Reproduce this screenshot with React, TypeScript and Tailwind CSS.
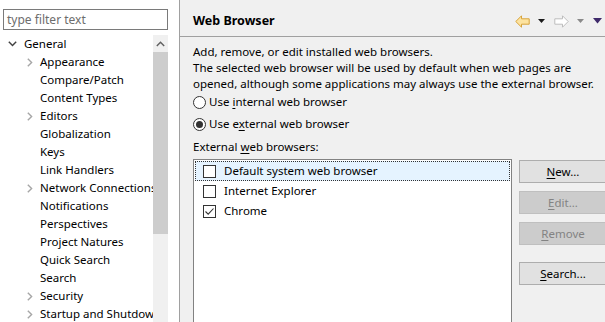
import React from "react";

const Chev = ({ down }: { down?: boolean }) =>
  down ? (
    <svg width="9" height="6" viewBox="0 0 9 6" className="block shrink-0">
      <path d="M0.8 0.8 L4.5 4.6 L8.2 0.8" fill="none" stroke="#404040" strokeWidth="1.4" />
    </svg>
  ) : (
    <svg width="6" height="9" viewBox="0 0 6 9" className="block shrink-0">
      <path d="M0.8 0.8 L4.6 4.5 L0.8 8.2" fill="none" stroke="#a6a6a6" strokeWidth="1.4" />
    </svg>
  );

const treeItems: { label: string; exp?: boolean }[] = [
  { label: "Appearance", exp: true },
  { label: "Compare/Patch" },
  { label: "Content Types" },
  { label: "Editors", exp: true },
  { label: "Globalization" },
  { label: "Keys" },
  { label: "Link Handlers" },
  { label: "Network Connections", exp: true },
  { label: "Notifications" },
  { label: "Perspectives" },
  { label: "Project Natures" },
  { label: "Quick Search" },
  { label: "Search" },
  { label: "Security", exp: true },
  { label: "Startup and Shutdown", exp: true },
];

const Btn = ({ pre, u, post, disabled, className }: { pre?: string; u: string; post: string; disabled?: boolean; className?: string }) => (
  <div
    className={
      "w-[88px] h-[23px] flex items-center justify-center border " +
      (disabled ? "bg-[#cccccc] border-[#bfbfbf] text-[#838383] " : "bg-[#e1e1e1] border-[#adadad] text-black ") +
      (className || "")
    }
  >
    {pre}
    <span className="underline underline-offset-2">{u}</span>
    {post}
  </div>
);

const Check = ({ checked }: { checked?: boolean }) => (
  <div className="w-[13px] h-[13px] shrink-0 border border-[#333333] bg-white flex items-center justify-center">
    {checked && (
      <svg width="11" height="11" viewBox="0 0 11 11">
        <path d="M1.5 5.5 L4.2 8.2 L9.5 2.5" fill="none" stroke="#333333" strokeWidth="1.1" />
      </svg>
    )}
  </div>
);

const Radio = ({ on }: { on?: boolean }) => (
  <div className="w-[13px] h-[13px] shrink-0 rounded-full border border-[#333333] bg-white flex items-center justify-center">
    {on && <div className="w-[7px] h-[7px] rounded-full bg-[#333333]" />}
  </div>
);

export default function App() {
  return (
    <div
      className="w-[605px] h-[322px] flex overflow-hidden bg-[#f0f0f0] text-[11.5px] text-black leading-[16px]"
      style={{ fontFamily: '"Noto Sans", "Noto Sans CJK KR", sans-serif' }}
    >
      {/* Left panel */}
      <div className="w-[179px] shrink-0 bg-white flex flex-col">
        <div className="pt-[9px] pl-[3px] pr-[11px]">
          <div className="h-[21px] border border-[#7a7a7a] flex items-center pl-[3px] text-[#6d6d6d] text-[12px]">
            type filter text
          </div>
        </div>
        <div className="flex flex-1 pt-[4px] min-h-0">
          <div className="flex-1 min-w-0 overflow-hidden pt-px">
            <div className="h-[18px] flex items-center whitespace-nowrap">
              <div className="w-[24px] shrink-0 pl-[8px] flex items-center">
                <Chev down />
              </div>
              <span>General</span>
            </div>
            {treeItems.map((it) => (
              <div key={it.label} className="h-[18px] flex items-center whitespace-nowrap">
                <div className="w-[40px] shrink-0 pl-[27px] flex items-center">{it.exp && <Chev />}</div>
                <span>{it.label}</span>
              </div>
            ))}
          </div>
          <div className="w-[15px] shrink-0 bg-[#f0f0f0] flex flex-col mt-[1px]">
            <div className="h-[17px] flex items-center justify-center">
              <svg width="9" height="6" viewBox="0 0 9 6">
                <path d="M0.8 5 L4.5 1.3 L8.2 5" fill="none" stroke="#606060" strokeWidth="1.4" />
              </svg>
            </div>
            <div className="h-[182px] bg-[#cdcdcd]" />
          </div>
          <div className="w-[11px] shrink-0" />
        </div>
      </div>
      {/* Sash */}
      <div className="w-px shrink-0 bg-[#a0a0a0]" />
      {/* Right panel */}
      <div className="flex-1 min-w-0 flex flex-col">
        <div className="h-[37px] shrink-0 pt-[6px] pl-[13px] flex items-center border-b border-[#a0a0a0]">
          <span className="font-bold text-[12.5px] flex-1">Web Browser</span>
          <div className="flex items-center">
            <svg width="15" height="13" viewBox="0 0 15 13" className="block">
              <path d="M0.8 6.5 L6.5 0.8 L6.5 3.8 L14.2 3.8 L14.2 9.2 L6.5 9.2 L6.5 12.2 Z" fill="#fde3a0" stroke="#d7a33a" strokeWidth="1" strokeLinejoin="round" />
            </svg>
            <svg width="7" height="4" viewBox="0 0 7 4" className="block ml-[8px]">
              <path d="M0 0 L7 0 L3.5 4 Z" fill="#1a1a1a" />
            </svg>
            <svg width="15" height="13" viewBox="0 0 15 13" className="block ml-[9px]">
              <path d="M14.2 6.5 L8.5 0.8 L8.5 3.8 L0.8 3.8 L0.8 9.2 L8.5 9.2 L8.5 12.2 Z" fill="#ffffff" stroke="#bdbdbd" strokeWidth="1" strokeLinejoin="round" />
            </svg>
            <svg width="7" height="4" viewBox="0 0 7 4" className="block ml-[8px]">
              <path d="M0 0 L7 0 L3.5 4 Z" fill="#8a8a8a" />
            </svg>
            <svg width="9" height="6" viewBox="0 0 9 6" className="block ml-[9px] mr-[3px]">
              <path d="M0 0 L9 0 L4.5 5.5 Z" fill="#3f2a6b" />
            </svg>
          </div>
        </div>
        <div className="pl-[13px] pt-[6px] flex flex-col">
          <div className="whitespace-nowrap pt-px">
            <div className="h-[16px]">Add, remove, or edit installed web browsers.</div>
            <div className="h-[16px]">The selected web browser will be used by default when web pages are</div>
            <div className="h-[16px]">opened, although some applications may always use the external browser.</div>
          </div>
          <div className="h-[22px] -mt-px flex items-center gap-[3px]">
            <Radio />
            <span>
              Use <span className="underline underline-offset-2">i</span>nternal web browser
            </span>
          </div>
          <div className="h-[22px] flex items-center gap-[3px]">
            <Radio on />
            <span>
              Use e<span className="underline underline-offset-2">x</span>ternal web browser
            </span>
          </div>
          <div className="h-[16px] mt-[4px]">
            External <span className="underline underline-offset-2">w</span>eb browsers:
          </div>
          <div className="flex gap-[7px] mt-[4px]">
            <div className="w-[319px] h-[200px] shrink-0 bg-white border border-[#828282] p-px">
              <div className="h-[20px] bg-[#e5f3ff] border border-dotted border-[#333333] flex items-center pl-[7px] gap-[8px]">
                <Check />
                <span>Default system web browser</span>
              </div>
              <div className="h-[20px] flex items-center pl-[8px] gap-[8px]">
                <Check />
                <span>Internet Explorer</span>
              </div>
              <div className="h-[20px] flex items-center pl-[8px] gap-[8px]">
                <Check checked />
                <span>Chrome</span>
              </div>
            </div>
            <div className="flex flex-col shrink-0 pt-[1px]">
              <Btn u="N" post="ew..." />
              <Btn u="E" post="dit..." disabled className="mt-[8px]" />
              <Btn u="R" post="emove" disabled className="mt-[8px]" />
              <Btn u="S" post="earch..." className="mt-[17px]" />
            </div>
          </div>
        </div>
      </div>
    </div>
  );
}
